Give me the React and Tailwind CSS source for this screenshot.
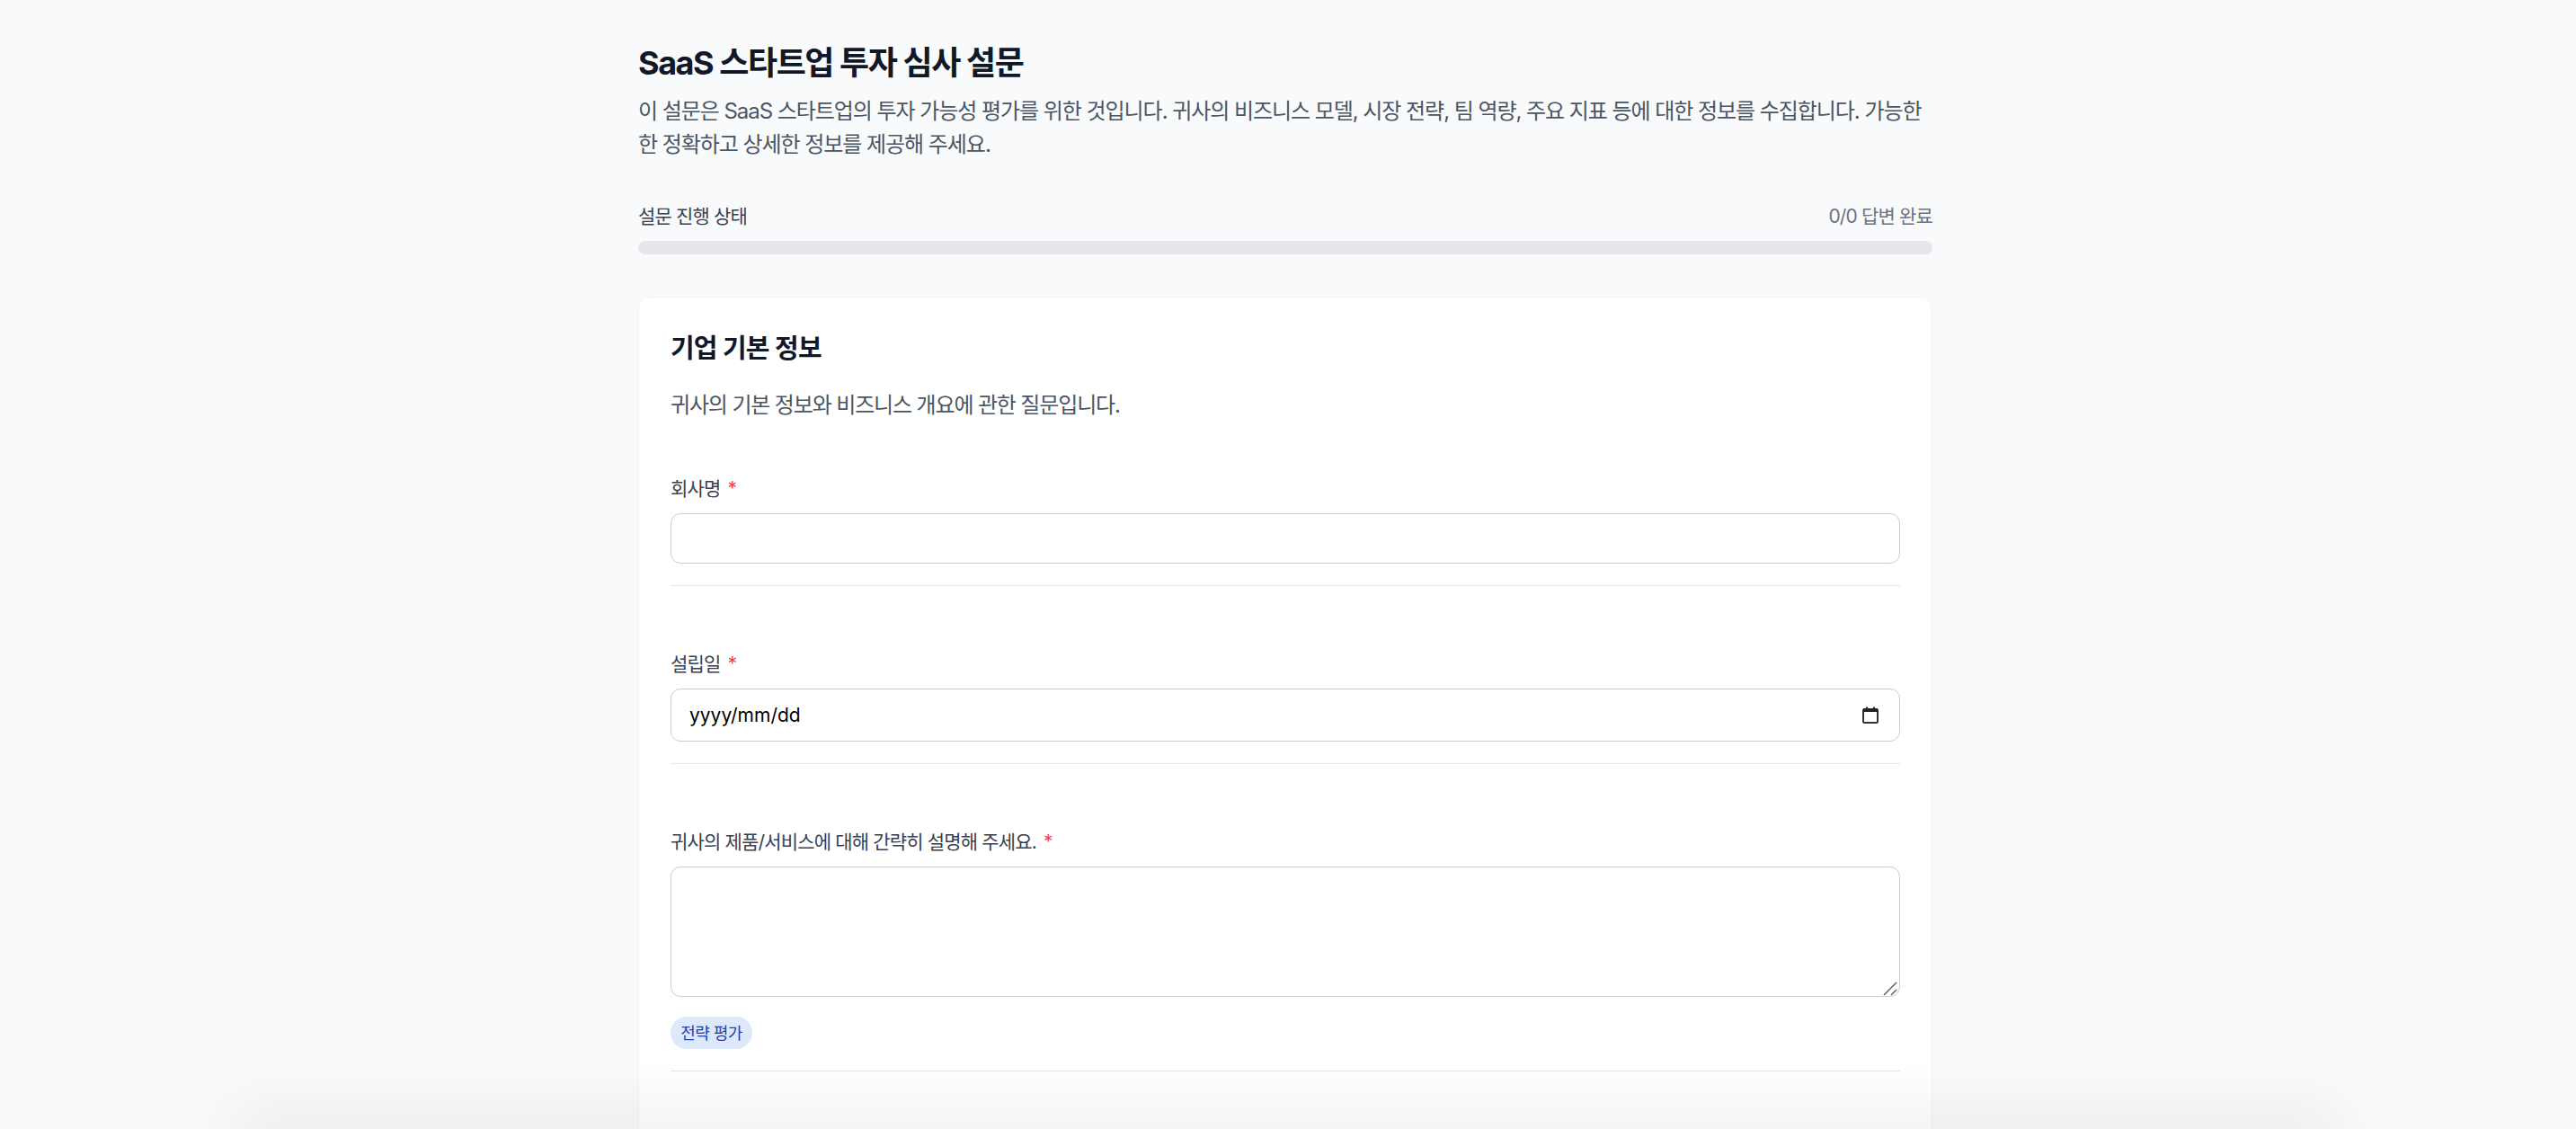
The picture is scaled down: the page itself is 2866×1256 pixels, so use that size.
const font = "[font-family:Inter,'Noto_Sans_CJK_KR',sans-serif]";

function Required() {
  return <span className="ml-[8px] text-[#ef4444]">*</span>;
}

function Question({ label, children }) {
  return (
    <div className="mb-[68px] border-b border-[#e5e7eb] pb-6">
      <label className="mb-2 block text-[21px] leading-[38px] font-normal tracking-[-0.04em] text-[#374151]">
        {label}
        <Required />
      </label>
      {children}
    </div>
  );
}

export default function App() {
  return (
    <div className={`relative h-screen overflow-hidden bg-[#f9fafb] pr-[6px] ${font}`}>
      <main className="mx-auto w-[1440px] pt-[43px]">
        <h1 className="text-[36px] leading-[54px] font-bold tracking-[-0.04em] text-[#111827]">
          SaaS 스타트업 투자 심사 설문
        </h1>
        <p className="mt-[9px] text-[24px] leading-[36.5px] tracking-[-0.044em] text-[#4b5563]">
          이 설문은 SaaS 스타트업의 투자 가능성 평가를 위한 것입니다. 귀사의 비즈니스 모델, 시장 전략, 팀 역량, 주요 지표 등에 대한 정보를 수집합니다. 가능한 한 정확하고 상세한 정보를 제공해 주세요.
        </p>

        <div className="mt-[43px] mb-2 flex items-center justify-between text-[21px] leading-[38px] tracking-[-0.04em]">
          <span className="font-normal text-[#374151]">설문 진행 상태</span>
          <span className="text-[#6b7280]">0/0 답변 완료</span>
        </div>
        <div className="h-[15px] rounded-full bg-[#e5e7eb]" />

        <section className="mt-[47px] rounded-[14px] border border-[#f3f4f6] bg-white px-[35px] pt-[37px] pb-24 shadow-[0_1px_2px_rgba(0,0,0,0.02)]">
          <h2 className="text-[29px] leading-[40px] font-semibold tracking-[-0.03em] text-[#111827]">기업 기본 정보</h2>
          <p className="mt-[24px] mb-[55px] text-[24px] leading-[38px] tracking-[-0.048em] text-[#4b5563]">
            귀사의 기본 정보와 비즈니스 개요에 관한 질문입니다.
          </p>

          <Question label="회사명">
            <input type="text" className="block h-14 w-full rounded-[11px] border border-[#c9cdd6] bg-white px-5" />
          </Question>

          <Question label="설립일">
            <div className="flex h-[59px] w-full items-center justify-between rounded-[11px] border border-[#c9cdd6] bg-white pr-[23px] pl-5">
              <span className="text-[21px] text-black">yyyy/mm/dd</span>
              <svg width="18" height="19" viewBox="0 0 18 19" fill="none">
                <rect x="1" y="3" width="16" height="15" rx="1.5" stroke="#333" strokeWidth="2" />
                <rect x="1" y="2" width="16" height="4" fill="#222" />
                <rect x="4" y="0.5" width="2" height="3" fill="#222" />
                <rect x="12" y="0.5" width="2" height="3" fill="#222" />
              </svg>
            </div>
          </Question>

          <Question label="귀사의 제품/서비스에 대해 간략히 설명해 주세요.">
            <div className="relative">
              <textarea className="block h-[145px] w-full resize-none rounded-[11px] border border-[#c9cdd6] bg-white px-5 py-3" />
              <svg className="absolute right-[3px] bottom-[1px]" width="16" height="16" viewBox="0 0 16 16" fill="none">
                <path d="M1 15 L15 1" stroke="#666" strokeWidth="1.6" />
                <path d="M9 15 L15 9" stroke="#666" strokeWidth="1.6" />
              </svg>
            </div>
            <span className="mt-[22px] flex h-9 w-[91px] items-center justify-center rounded-full bg-[#dee8fb] text-[18px] font-normal tracking-[-0.03em] text-[#1e40af]">
              전략 평가
            </span>
          </Question>
        </section>
      </main>

      <div className="absolute top-full right-[270px] left-[265px] h-2 shadow-[0_0_70px_6px_rgba(0,0,0,0.18)]" />
    </div>
  );
}
